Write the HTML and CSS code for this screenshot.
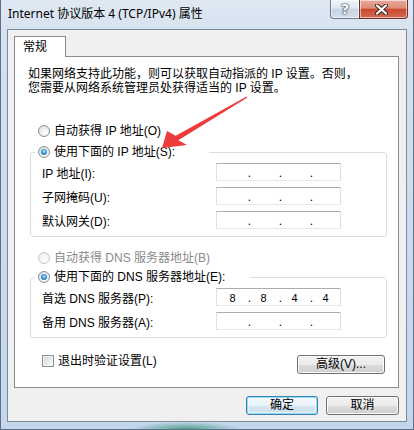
FILE: index.html
```html
<!DOCTYPE html>
<html lang="zh-CN">
<head>
<meta charset="utf-8">
<title>Internet 协议版本 4 (TCP/IPv4) 属性</title>
<link rel="stylesheet" href="styles.css">
</head>
<body>
<div class="window">
  <div class="titlebar">
    <div class="title">Internet 协议版本 4 (TCP/IPv4) 属性</div>
    <div class="caps">
      <div class="cap help">?</div>
      <div class="cap close">
        <svg width="13" height="11" viewBox="0 0 13 11"><path d="M2 1.5 L11 9.5 M11 1.5 L2 9.5" stroke="#3a2a28" stroke-width="4.2" stroke-linecap="round"/><path d="M2 1.5 L11 9.5 M11 1.5 L2 9.5" stroke="#ffffff" stroke-width="2.2" stroke-linecap="round"/></svg>
      </div>
    </div>
  </div>
  <div class="client">
    <div class="tabs"><div class="tab">常规</div></div>
    <div class="page">
      <p class="intro"><span class="line">如果网络支持此功能，则可以获取自动指派的 IP 设置。否则，</span><span class="line">您需要从网络系统管理员处获得适当的 IP 设置。</span></p>
      <div class="opt opt1"><span class="radio"></span>自动获得 IP 地址(O)</div>
      <fieldset class="group g1">
        <legend class="leg1"><span class="radio on"></span>使用下面的 IP 地址(S):</legend>
        <div class="rows">
          <div class="row"><span class="lbl">IP 地址(I):</span><div class="ip"><span class="seg"></span><span class="dot">.</span><span class="seg"></span><span class="dot">.</span><span class="seg"></span><span class="dot">.</span><span class="seg"></span></div></div>
          <div class="row"><span class="lbl">子网掩码(U):</span><div class="ip"><span class="seg"></span><span class="dot">.</span><span class="seg"></span><span class="dot">.</span><span class="seg"></span><span class="dot">.</span><span class="seg"></span></div></div>
          <div class="row"><span class="lbl">默认网关(D):</span><div class="ip"><span class="seg"></span><span class="dot">.</span><span class="seg"></span><span class="dot">.</span><span class="seg"></span><span class="dot">.</span><span class="seg"></span></div></div>
        </div>
      </fieldset>
      <div class="opt opt3 disabled"><span class="radio"></span>自动获得 DNS 服务器地址(B)</div>
      <fieldset class="group g2">
        <legend class="leg2"><span class="radio on"></span>使用下面的 DNS 服务器地址(E):</legend>
        <div class="rows">
          <div class="row"><span class="lbl">首选 DNS 服务器(P):</span><div class="ip"><span class="seg">8</span><span class="dot">.</span><span class="seg">8</span><span class="dot">.</span><span class="seg">4</span><span class="dot">.</span><span class="seg">4</span></div></div>
          <div class="row"><span class="lbl">备用 DNS 服务器(A):</span><div class="ip"><span class="seg"></span><span class="dot">.</span><span class="seg"></span><span class="dot">.</span><span class="seg"></span><span class="dot">.</span><span class="seg"></span></div></div>
        </div>
      </fieldset>
      <div class="bottom-row">
        <div class="check"><span class="box"></span>退出时验证设置(L)</div>
        <button class="btn adv">高级(V)...</button>
      </div>
    </div>
    <div class="actions">
      <button class="btn ok">确定</button>
      <button class="btn cancel">取消</button>
    </div>
  </div>
</div>
<svg class="arrow" width="414" height="430" viewBox="0 0 414 430">
  <polygon points="246.6,96.4 175.7,135.8 167,131 162,148 187,145 178.3,140.2 247.4,97.6" fill="#ee3b3b"/>
</svg>
</body>
</html>
```

FILE: styles.css
```css
* { box-sizing: border-box; margin: 0; padding: 0; }
html, body { width: 414px; height: 430px; overflow: hidden; }
body {
  font: 12px "Liberation Sans", "Noto Sans CJK SC", sans-serif;
  color: #000;
  background: #c8d9ed;
  position: relative;
}

.window {
  width: 414px;
  height: 430px;
  display: flex;
  flex-direction: column;
  padding: 0 6px 7px 6px;
  border: 1px solid #5d7088;
  border-top: 0;
  background:
    radial-gradient(ellipse 55px 7px at 185px 429px, #4f9f8c 0, rgba(79,159,140,0) 100%),
    linear-gradient(180deg, #dfe8f3 0, #d5e1ef 40px, #c3d6ec 100%);
}

.titlebar {
  height: 29px;
  display: flex;
  justify-content: space-between;
  flex: none;
}
.title {
  font: 12px "Noto Sans", "Noto Sans CJK SC", sans-serif;
  line-height: 16px;
  padding: 6px 0 0 1px;
  color: #000;
}
.caps {
  display: flex;
  height: 19px;
  margin-right: -1px;
}
.cap {
  height: 19px;
  border: 1px solid #6b7a8e;
  border-top: 0;
  display: flex;
  align-items: center;
  justify-content: center;
  box-shadow: inset 0 0 0 1px rgba(255,255,255,0.55);
}
.help {
  width: 29px;
  border-right: 0;
  border-bottom-left-radius: 4px;
  background: linear-gradient(180deg, #eef3f9 0, #dfe7f1 45%, #c6d4e6 52%, #d2deec 100%);
  color: #fff;
  font: bold 14px "DejaVu Sans", sans-serif;
  line-height: 17px;
  text-shadow: 0 0 1px #2c3a4d, 0 0 1px #2c3a4d, 0 0 2px #2c3a4d;
  padding-top: 1px;
}
.close {
  width: 49px;
  border-color: #6e3328;
  border-bottom-right-radius: 4px;
  background: linear-gradient(180deg, #e9ab9c 0, #df8b78 45%, #c84a30 52%, #d46a50 100%);
}
.close svg { display: block; margin-left: -4px; }

.client {
  flex: 1;
  border: 1px solid #7b8a9b;
  background: #f0f0f0;
  padding: 6px 7px 0 6px;
  display: flex;
  flex-direction: column;
}

.tabs { display: flex; height: 20px; }
.tab {
  position: relative;
  z-index: 1;
  width: 52px;
  height: 21px;
  border: 1px solid #898c95;
  border-bottom: 0;
  background: #fff;
  line-height: 14px;
  padding: 3px 0 0 8px;
}

.page {
  height: 332px;
  border: 1px solid #898c95;
  background: #fff;
}

.intro {
  margin: 10px 0 0 13px;
  display: flex;
  flex-direction: column;
  white-space: nowrap;
}
.intro .line {
  display: block;
  height: 14px;
  line-height: 14px;
}

.opt {
  display: flex;
  align-items: center;
  height: 16px;
  line-height: 16px;
  padding-left: 23px;
  white-space: nowrap;
}
.opt1 { margin-top: 28px; }
.opt3 { margin-top: 13px; }
.disabled { color: #8a8a8a; }

.radio {
  position: relative;
  flex: none;
  width: 12px;
  height: 12px;
  margin-right: 4px;
  border-radius: 50%;
  border: 1px solid #8c8f92;
  background: radial-gradient(circle at 65% 70%, #ffffff 0, #f3f3f3 35%, #d6d8da 100%);
}
.disabled .radio {
  border-color: #c4c6c8;
  background: radial-gradient(circle at 65% 70%, #ffffff 0, #f7f7f7 40%, #e8e8e8 100%);
}
.radio.on::after {
  content: "";
  position: absolute;
  left: 2px;
  top: 2px;
  width: 6px;
  height: 6px;
  border-radius: 50%;
  background: radial-gradient(circle at 50% 40%, #b6e8ff 0, #3d9fdc 45%, #124d80 100%);
}

.group {
  border: 1px solid #d5dfe5;
  border-radius: 3px;
  padding: 0 0 7px 0;
  min-width: 0;
}
.g1 { margin: 5px 11px 0 15px; }
.g2 { margin: 3px 11px 0 15px; }
.group legend {
  display: flex;
  align-items: center;
  height: 16px;
  line-height: 16px;
  margin-left: 4px;
  padding: 0 0 0 3px;
  white-space: nowrap;
}
.leg1 { width: 174px; }
.leg2 { width: 215px; }

.rows {
  display: flex;
  flex-direction: column;
  gap: 6px;
  padding: 3px 0 0 11px;
}
.row {
  display: flex;
  align-items: center;
  height: 18px;
  white-space: nowrap;
}
.lbl { width: 174px; flex: none; }

.ip {
  width: 125px;
  height: 18px;
  display: flex;
  padding-left: 5px;
  background: #fff;
  border: 1px solid #dbdfe6;
  border-top-color: #abadb3;
  border-bottom-color: #e3e9ef;
  line-height: 16px;
}
.seg {
  width: 21px;
  text-align: center;
  font: 11px "Liberation Sans", sans-serif;
  line-height: 16px;
  padding-top: 1px;
}
.dot {
  width: 10px;
  text-align: right;
  padding-right: 2px;
  padding-top: 1px;
}

.bottom-row {
  display: flex;
  justify-content: space-between;
  align-items: flex-start;
  margin-top: 15px;
  padding: 0 13px 0 27px;
}
.check {
  display: flex;
  align-items: center;
  height: 16px;
  line-height: 16px;
}
.box {
  width: 12px;
  height: 12px;
  margin-right: 4px;
  border: 1px solid #8e8f8f;
  background: linear-gradient(135deg, #cdd1d6 0, #e9ebee 55%, #fbfbfb 100%);
  box-shadow: inset 0 0 0 1px #f4f4f4;
}

.btn {
  display: block;
  height: 19px;
  border: 1px solid #707070;
  border-radius: 3px;
  background: linear-gradient(180deg, #f2f2f2 0, #ebebeb 50%, #dddddd 50%, #cfcfcf 100%);
  box-shadow: inset 0 0 0 1px #fbfbfb;
  font: 12px "Liberation Sans", "Noto Sans CJK SC", sans-serif;
  line-height: 17px;
  color: #000;
  text-align: center;
  padding: 0;
}
.adv { width: 88px; margin-top: 2px; }

.actions {
  display: flex;
  justify-content: flex-end;
  gap: 8px;
  margin-top: 8px;
}
.ok {
  width: 72px;
  border-color: #3c7fb1;
  background: linear-gradient(180deg, #f3f9fd 0, #e8f2f9 50%, #d7e7f2 50%, #c9deec 100%);
  box-shadow: inset 0 0 0 1px #8fdcf8, inset 0 0 0 2px rgba(255,255,255,0.5);
}
.cancel { width: 73px; }

.arrow {
  position: absolute;
  left: 0;
  top: 0;
  pointer-events: none;
}
```
